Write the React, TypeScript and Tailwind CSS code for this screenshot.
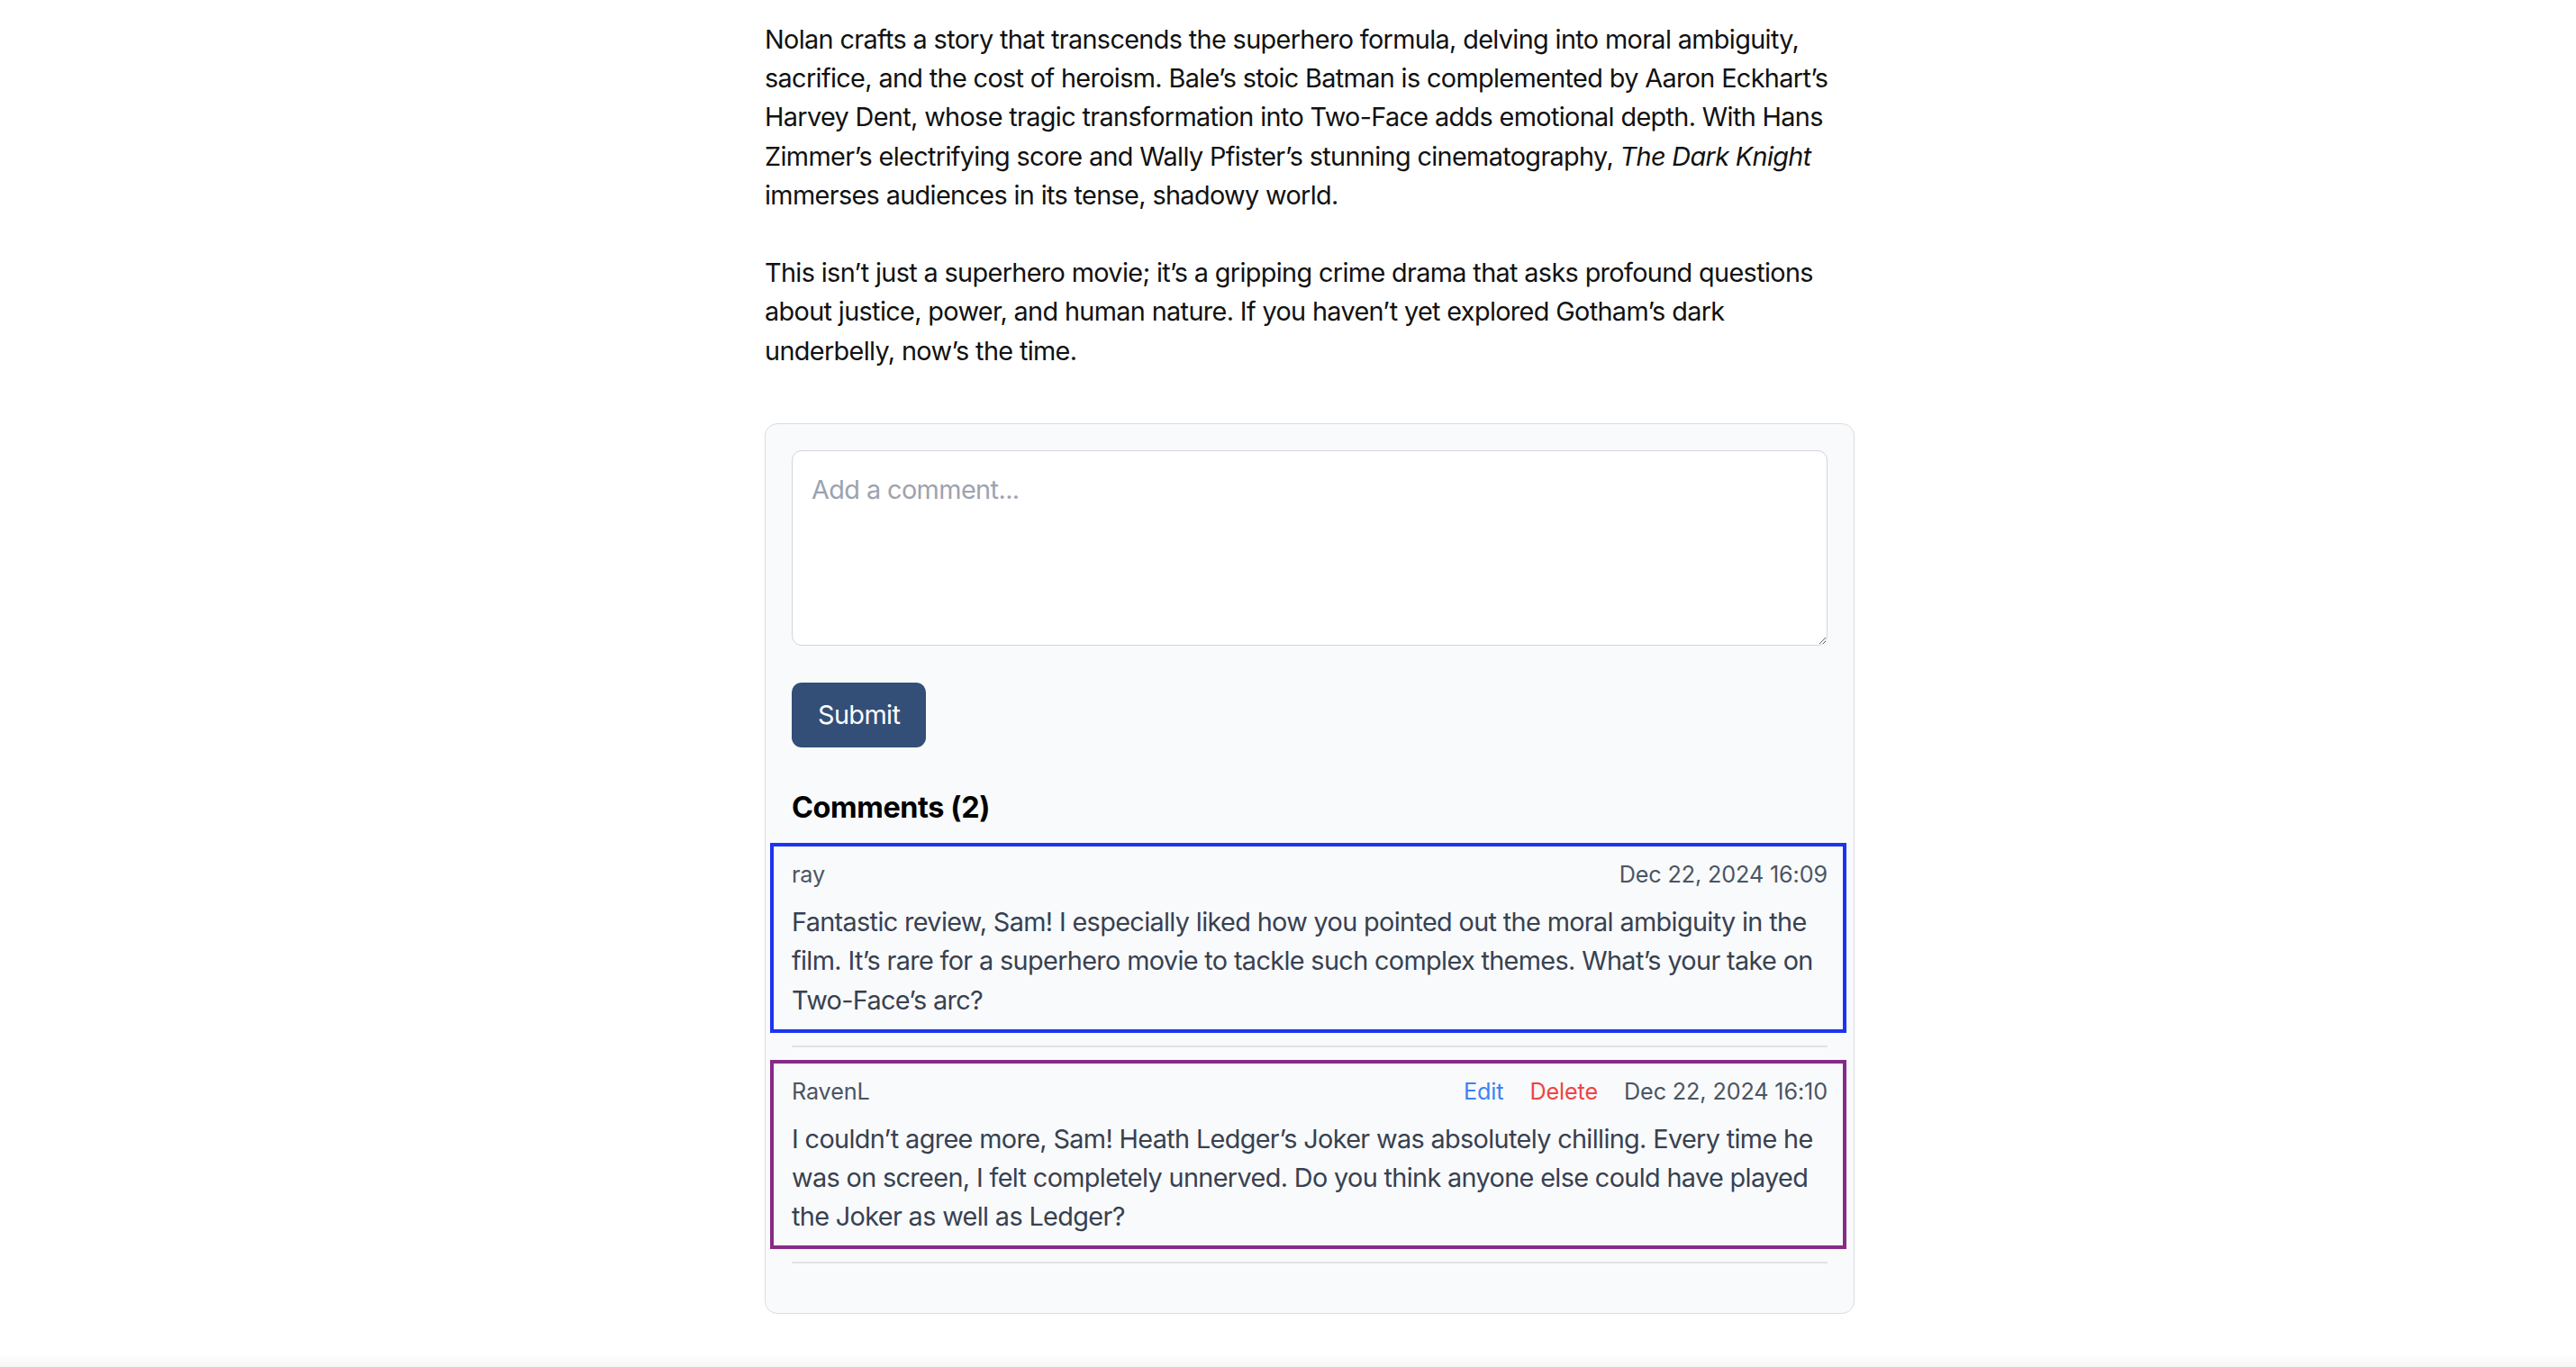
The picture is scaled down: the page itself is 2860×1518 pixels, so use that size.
import React from "react";

type C = { user: string; date: string; body: string; color: string; own?: boolean };

const comments: C[] = [
  {
    user: "ray",
    date: "Dec 22, 2024 16:09",
    body: "Fantastic review, Sam! I especially liked how you pointed out the moral ambiguity in the film. It’s rare for a superhero movie to tackle such complex themes. What’s your take on Two-Face’s arc?",
    color: "border-[#1b34f5]",
  },
  {
    user: "RavenL",
    date: "Dec 22, 2024 16:10",
    body: "I couldn’t agree more, Sam! Heath Ledger’s Joker was absolutely chilling. Every time he was on screen, I felt completely unnerved. Do you think anyone else could have played the Joker as well as Ledger?",
    color: "border-[#882a88]",
    own: true,
  },
];

export default function App() {
  return (
    <div className="min-h-[1518px] bg-white flex flex-col" style={{ fontFamily: "Inter, 'Noto Sans', sans-serif" }}>
      <div className="ml-[849px] w-[1210px] pt-[22px] flex-1">
        <div className="text-[28.8px] leading-[43.2px] tracking-[-0.022em] text-[#111111]">
          <p className="mb-[43.2px]">
            Nolan crafts a story that transcends the superhero formula, delving into moral ambiguity, sacrifice, and the cost of heroism. Bale’s stoic Batman is complemented by Aaron Eckhart’s Harvey Dent, whose tragic transformation into Two-Face adds emotional depth. With Hans Zimmer’s electrifying score and Wally Pfister’s stunning cinematography, <em>The Dark Knight</em> immerses audiences in its tense, shadowy world.
          </p>
          <p>
            This isn’t just a superhero movie; it’s a gripping crime drama that asks profound questions about justice, power, and human nature. If you haven’t yet explored Gotham’s dark underbelly, now’s the time.
          </p>
        </div>

        <div className="mt-[59px] border border-[#d9dce1] rounded-[14px] bg-[#f9fafb] p-[29px] pb-[41px]">
          <textarea
            placeholder="Add a comment..."
            className="block w-full h-[217px] bg-white border border-[#d1d5db] rounded-[11px] p-[21px] text-[28.8px] leading-[43.2px] tracking-[-0.02em] text-[#111827] placeholder:text-[#9ca3af] outline-none"
          />
          <button className="mt-[41px] h-[72px] px-[29px] rounded-[11px] bg-[#334f78] text-white text-[28.8px] leading-[43.2px] tracking-[-0.02em]">
            Submit
          </button>
          <h2 className="mt-[42px] text-[32.4px] leading-[50.4px] font-bold tracking-[-0.012em] text-black">Comments (2)</h2>
          <div className="mt-[14px]">
            {comments.map((c) => (
              <div key={c.user}>
                <div className={`ml-[-24px] mr-[-21px] border-4 ${c.color} pl-[20px] pr-[17px] pt-[13px] pb-[11px]`}>
                  <div className="flex items-center justify-between text-[25.2px] leading-[36px] tracking-[-0.005em]">
                    <span className="text-[#4b5563]">{c.user}</span>
                    <div className="flex items-center gap-[29px]">
                      {c.own && <span className="text-[#3b82f6]">Edit</span>}
                      {c.own && <span className="text-[#ef4444]">Delete</span>}
                      <span className="text-[#4b5563]">{c.date}</span>
                    </div>
                  </div>
                  <p className="mt-[13px] text-[28.8px] leading-[43.2px] tracking-[-0.022em] text-[#374151]">{c.body}</p>
                </div>
                <div className="my-[14px] h-[2px] bg-[#e0e2e6]" />
              </div>
            ))}
          </div>
        </div>
      </div>
      <div className="h-[12px] w-full bg-gradient-to-b from-[#fdfdfd] to-[#f6f6f7]" />
    </div>
  );
}
